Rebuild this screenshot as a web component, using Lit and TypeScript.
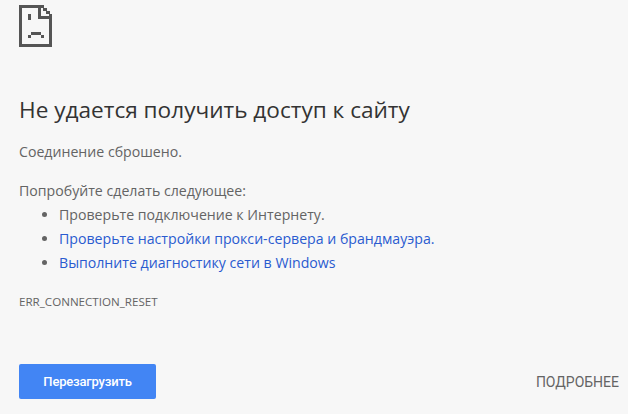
import { LitElement, html, css } from "lit";
import { customElement } from "lit/decorators.js";

@customElement("app-root")
export class AppRoot extends LitElement {
  static styles = css`
    :host {
      display: block;
      width: 628px;
      height: 414px;
      background: #f7f7f7;
      overflow: hidden;
      font-family: "Open Sans", "Noto Sans", sans-serif;
      color: #646464;
      font-size: 14.15px;
    }
    .page {
      display: flex;
      flex-direction: column;
      height: 414px;
      padding: 5px 9px 15px 19px;
      box-sizing: border-box;
    }
    .icon { display: block; width: 33px; height: 42px; }
    h1 {
      margin: 48px 0 0;
      font-size: 22.6px;
      font-weight: 400;
      line-height: 30px;
      color: #333;
    }
    p { margin: 0; line-height: 20px; }
    .msg { margin-top: 17px; }
    .try { margin-top: 19px; }
    ul { margin: 2px 0 0; padding: 0 0 0 40px; list-style: disc; }
    li { line-height: 24px; }
    a { color: #2a5bd0; text-decoration: none; }
    .code { margin-top: 19px; font-size: 11.6px; line-height: 16px; color: #646464; }
    .actions {
      margin-top: auto;
      display: flex;
      justify-content: space-between;
      align-items: center;
    }
    .reload {
      width: 137px;
      height: 35px;
      border: 0;
      border-radius: 2px;
      background: #4285f4;
      color: #fff;
      font-family: Roboto, sans-serif;
      font-size: 13px;
      font-weight: 500;
      letter-spacing: -0.2px;
      padding: 0;
    }
    .more {
      font-family: Roboto, sans-serif;
      font-size: 14px;
      color: #646464;
    }
  `;

  render() {
    return html`
      <div class="page">
        <svg class="icon" viewBox="0 0 33 42" shape-rendering="crispEdges" fill="#555">
          <path d="M0 0h22v3H3v36h27V14h3v28H0z" />
          <path d="M19 0h3v11h11v3H19z" />
          <path d="M22 0h3v3h3v3h3v3h2v3h-3V9h-3V6h-3V3h-3z" />
          <path d="M9 9h3v6H9zM9 30h3v3H9zM12 27h10v3H12zM22 30h3v3h-3z" />
        </svg>
        <h1>Не удается получить доступ к сайту</h1>
        <p class="msg">Соединение сброшено.</p>
        <p class="try">Попробуйте сделать следующее:</p>
        <ul>
          <li>Проверьте подключение к Интернету.</li>
          <li><a href="#">Проверьте настройки прокси-сервера и брандмауэра.</a></li>
          <li><a href="#">Выполните диагностику сети в Windows</a></li>
        </ul>
        <div class="code">ERR_CONNECTION_RESET</div>
        <div class="actions">
          <button class="reload">Перезагрузить</button>
          <span class="more">ПОДРОБНЕЕ</span>
        </div>
      </div>
    `;
  }
}
